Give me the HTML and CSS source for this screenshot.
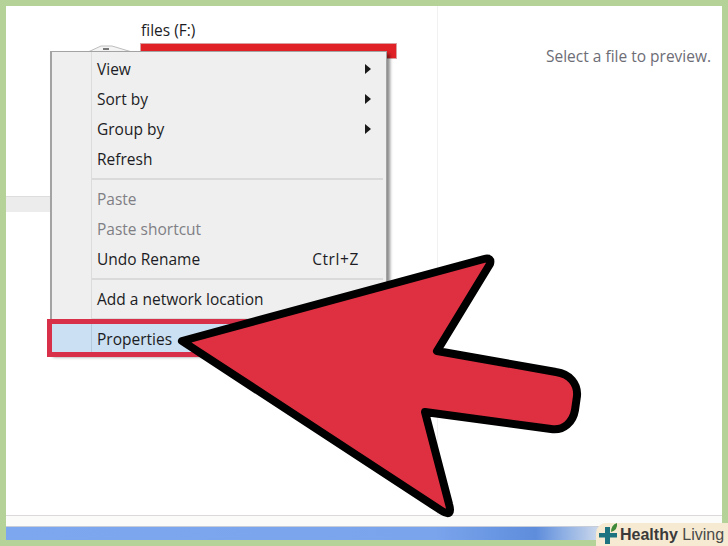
FILE: index.html
```html
<!DOCTYPE html>
<html lang="en">
<head>
    <meta charset="UTF-8">
    <meta name="viewport" content="width=device-width, initial-scale=1.0">
    <title>Properties</title>
    <link rel="stylesheet" href="styles.css">
</head>
<body>
    <div class="frame">
        <div class="explorer">
            <div class="drives">
                <div class="drive-name">files (F:)</div>
                <div class="drive-bar"></div>
            </div>
            <div class="preview">Select a file to preview.</div>
        </div>
        <div class="status-line"></div>
        <div class="taskbar"></div>
    </div>

    <div class="scroll-stub"></div>

    <svg class="drive-icon" width="44" height="8" viewBox="0 0 44 8">
        <path d="M0 7 L13 1 L24 1 L44 7 Z" fill="#f4f4f4" stroke="#bdbdbd"/>
        <rect x="15" y="3" width="6" height="2" fill="#777"/>
    </svg>

    <div class="menu">
        <div class="item"><span>View</span><i class="caret"></i></div>
        <div class="item"><span>Sort by</span><i class="caret"></i></div>
        <div class="item"><span>Group by</span><i class="caret"></i></div>
        <div class="item"><span>Refresh</span></div>
        <div class="sep"></div>
        <div class="item off"><span>Paste</span></div>
        <div class="item off"><span>Paste shortcut</span></div>
        <div class="item"><span>Undo Rename</span><span class="key">Ctrl+Z</span></div>
        <div class="sep"></div>
        <div class="item"><span>Add a network location</span></div>
        <div class="sep"></div>
        <div class="item active"><span>Properties</span></div>
    </div>

    <svg class="arrow" width="728" height="546" viewBox="0 0 728 546">
        <path d="M182 341 L484 259 Q492 257 490 264 L437 351 L556 372 C570 374 578 384 577 396 L575 410 C573 422 564 431 551 429 L425 412 L449 504 Q453 518 442 511 Z" fill="#df3042" stroke="#000" stroke-width="8" stroke-linejoin="round"/>
    </svg>

    <div class="brand">
        <svg class="brand-mark" width="22" height="23" viewBox="0 0 22 23">
            <path d="M9 4 H14 V10 H21 V14.5 H14 V21 H9 V14.5 H3 V10 H9 Z" fill="#1d7480"/>
            <path d="M15 9 Q15 2 21 0 Q22 7 15 9 Z" fill="#3f8a3a"/>
        </svg>
        <span class="brand-text"><b>Healthy</b> Living</span>
    </div>
</body>
</html>
```

FILE: styles.css
```css
html, body {
    margin: 0;
    padding: 0;
}
body {
    width: 728px;
    height: 546px;
    overflow: hidden;
    background-color: #b5d399;
    font-family: 'Open Sans', 'Noto Sans', sans-serif;
    color: #1c1c24;
}
.frame {
    box-sizing: border-box;
    width: 728px;
    height: 546px;
    padding: 6px;
    display: flex;
    flex-direction: column;
}
.explorer {
    flex: 1;
    background: white;
    display: flex;
}
.drives {
    width: 432px;
    box-sizing: border-box;
    padding: 13px 0 0 134px;
    border-right: 1px solid #f1f1f1;
}
.drive-name {
    font-size: 15.5px;
    line-height: 22px;
    padding-left: 1px;
}
.drive-bar {
    width: 257px;
    height: 16px;
    margin-top: 2px;
    background: #e02226;
    box-sizing: border-box;
    border: 1px solid #d8a0a0;
}
.preview {
    padding: 39px 0 0 108px;
    font-size: 15.5px;
    line-height: 22px;
    color: #6d6d76;
    white-space: nowrap;
}
.status-line {
    height: 10px;
    background: #fbfbfa;
    border-top: 1px solid #dcd8dc;
}
.taskbar {
    height: 13px;
    border-top: 1px solid #c6cdd8;
    background: linear-gradient(90deg, #7da8ef 0%, #7aa4ec 60%, #5e8ddc 74%, #8fb0e4 78%, #b4c8e8 81%, #d0dcec 83%, #d0dcec 100%);
}
.scroll-stub {
    position: absolute;
    left: 6px;
    top: 196px;
    width: 44px;
    height: 16px;
    background: #ececec;
    border-top: 1px solid #dddddd;
    box-sizing: border-box;
}
.drive-icon {
    position: absolute;
    left: 88px;
    top: 45px;
}
.menu {
    position: absolute;
    left: 50px;
    top: 51px;
    width: 337px;
    box-sizing: border-box;
    background: #efefef;
    border: 1px solid #a3a3a3;
    border-left-width: 2px;
    padding-top: 2px;
    box-shadow: 3px 3px 3px rgba(0, 0, 0, 0.45);
    font-size: 15.5px;
}
.menu::before {
    content: "";
    position: absolute;
    left: 39px;
    top: 0;
    bottom: 0;
    width: 1px;
    background: #dcdcdc;
}
.item {
    height: 30px;
    display: flex;
    align-items: center;
    justify-content: space-between;
    padding: 0 15px 0 45px;
}
.item.off {
    color: #7f7f85;
}
.key {
    padding-right: 12px;
    letter-spacing: 0.6px;
}
.caret {
    width: 0;
    height: 0;
    border-left: 6px solid #1a1a1a;
    border-top: 5px solid transparent;
    border-bottom: 5px solid transparent;
}
.sep {
    height: 2px;
    margin: 4px 3px 4px 40px;
    background: #dadada;
}
.item.active {
    position: relative;
    box-sizing: border-box;
    height: 28px;
    padding-top: 2px;
    margin-top: 1px;
    margin-bottom: 1px;
    background: linear-gradient(90deg, #cbe0f2 39px, #b4c9dc 39px, #b4c9dc 40px, #cbe0f2 40px);
    box-shadow: 0 0 0 5px #d9304a;
}
.arrow {
    position: absolute;
    left: 0;
    top: 0;
}
.brand {
    position: absolute;
    left: 596px;
    top: 523px;
    width: 132px;
    height: 23px;
    box-sizing: border-box;
    background: #f6ead2;
    border-top-left-radius: 10px;
    display: flex;
    align-items: center;
    gap: 2px;
}
.brand-mark {
    flex: none;
}
.brand-text {
    font-family: 'Liberation Sans', sans-serif;
    font-size: 16px;
    color: #4a4a4a;
    white-space: nowrap;
}
.brand-text b {
    color: #3a3a3a;
}
```
